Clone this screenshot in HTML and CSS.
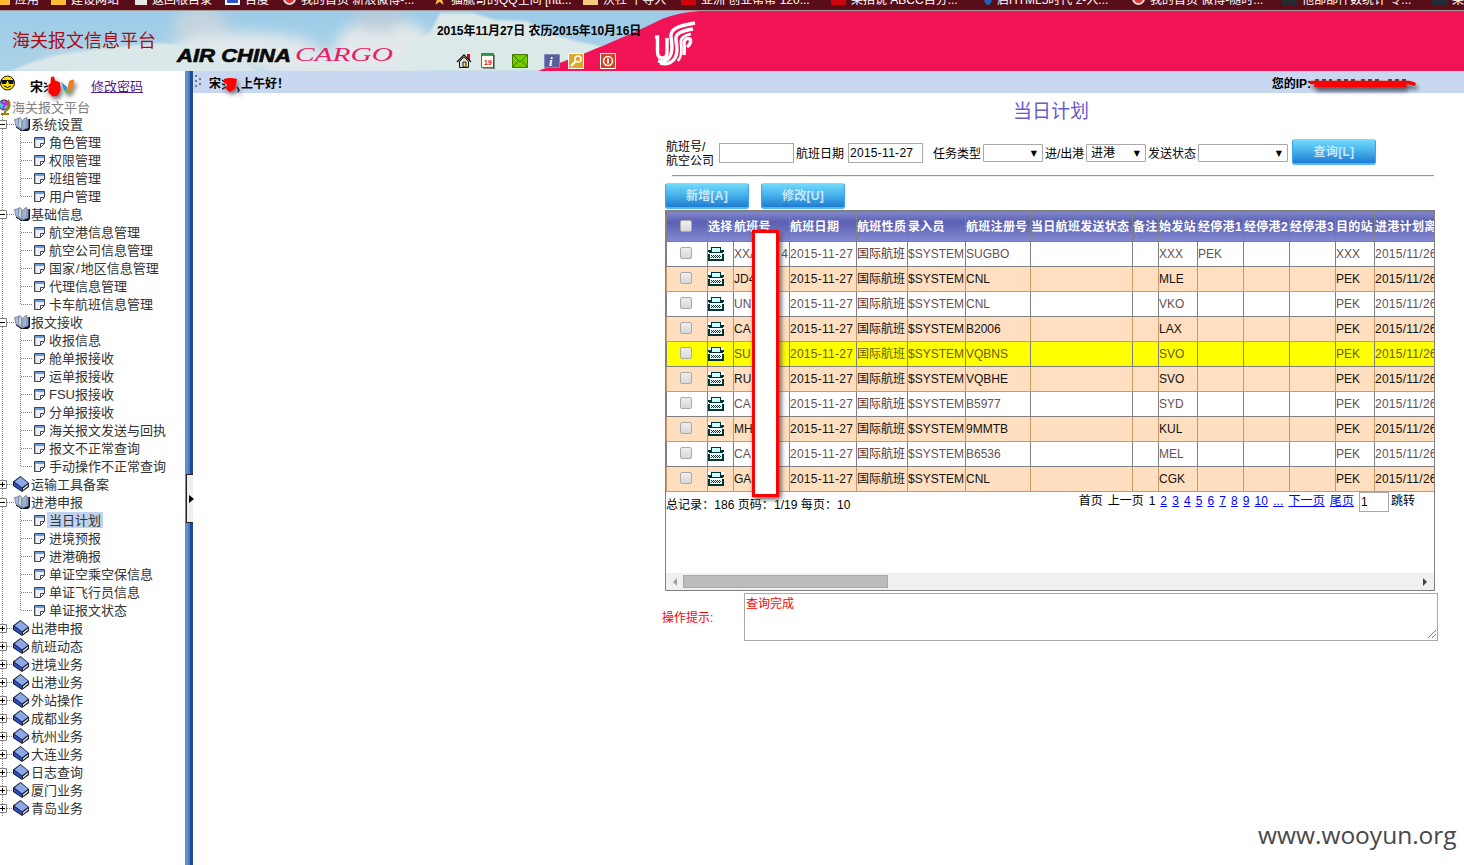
FILE: index.html
```html
<!DOCTYPE html>
<html lang="zh-CN">
<head>
<meta charset="utf-8">
<title>海关报文信息平台</title>
<link rel="stylesheet" href="styles.css">
</head>
<body>
<svg class="defs" width="0" height="0" aria-hidden="true">
  <symbol id="book-open" viewBox="0 0 16 16">
    <path d="M14 3h2v10l-2 2H7l-1-1 7-2z" fill="#111"/>
    <path d="M.500 3.500L5 2.500v8l3 4-6-4z" fill="#a9bfe9" stroke="#55658f" stroke-width=".7"/>
    <path d="M5 1.500q3 0 3 4v9q-2-4-4-4z" fill="#c5d2dd" stroke="#687486" stroke-width=".7"/>
    <path d="M8 5l3-3 2-.5v9l-5 4z" fill="#9fb2cf" stroke="#687486" stroke-width=".7"/>
    <path d="M13 3h1.500v9L8 14.500l5-4z" fill="#8199e4"/>
    <path d="M2 11l6 4" stroke="#111"/>
  </symbol>
  <symbol id="book-closed" viewBox="0 0 16 16">
    <path d="M0 5.500L7.500 0 16 7v4l-7 5-9-6z" fill="#1a1a2a"/>
    <path d="M7.500 1L15 7 9 11.500 1.500 5.700z" fill="#8ba8e8"/><path d="M1 6.500l8 6v2.500L1 9.500z" fill="#2c50cc"/>
    <path d="M10 12.500l5-4v1.500l-5 4z" fill="#fff"/>
  </symbol>
  <symbol id="tree-open" viewBox="0 0 31 18">
    <path d="M2.500 0v18M7 9.500h8" stroke="#808080" stroke-dasharray="1 1"/>
    <path d="M-2.500 5.500h9v8h-9z" fill="#fff" stroke="#808080"/><path d="M0 9.500h5" stroke="#000"/>
    <use href="#book-open" x="14" y="1" width="16" height="16"/>
  </symbol>
  <symbol id="tree-closed" viewBox="0 0 31 18">
    <path d="M2.500 0v18M7 9.500h8" stroke="#808080" stroke-dasharray="1 1"/>
    <path d="M-2.500 5.500h9v8h-9z" fill="#fff" stroke="#808080"/><path d="M0 9.500h5M2.500 7v5" stroke="#000"/>
    <use href="#book-closed" x="13" y="1" width="16" height="16"/>
  </symbol>
  <symbol id="page" viewBox="0 0 11 11">
    <path d="M.500.500h10v6l-4 4h-6z" fill="#eaf1fd" stroke="#444"/><path d="M1 1h9v2H1z" fill="#6a9be8"/>
    <path d="M1 3h1v7H1z" fill="#a4c2f4"/><path d="M6.500 10V6.500H10" fill="#fff" stroke="#444"/>
  </symbol>
  <symbol id="tree-leaf" viewBox="0 0 47 18">
    <path d="M2.500 0v18M20.500 0v18M21 9.500h11" stroke="#808080" stroke-dasharray="1 1"/>
    <use href="#page" x="34" y="4" width="11" height="11"/>
  </symbol>
  <symbol id="tree-last" viewBox="0 0 47 18">
    <path d="M2.500 0v18M20.500 0v10M21 9.500h11" stroke="#808080" stroke-dasharray="1 1"/>
    <use href="#page" x="34" y="4" width="11" height="11"/>
  </symbol>
  <symbol id="fax" viewBox="0 0 16 14">
    <path d="M3 0h10v5H3z" fill="#033"/><path d="M4 1h8v4H4z" fill="#cff"/>
    <path d="M0 3h3v2H0zM13 3h3v2h-3zM1 5h14v1H1z" fill="#033"/>
    <path d="M0 7h16v7H0z" fill="#033"/><path d="M2 7h12v5H2z" fill="#f4ffff"/>
    <path d="M3 8.500h10M3 10.500h10" stroke="#033" stroke-dasharray="1 1"/><path d="M4 9.500h9" stroke="#033" stroke-dasharray="1 1"/>
  </symbol>
</svg>

<nav class="bookmarks">
  <span class="bm" style="width:51px"><i class="ic orange"></i>应用</span>
  <span class="bm" style="width:84px"><i class="ic gold"></i>建设网站</span>
  <span class="bm" style="width:90px"><i class="ic doc"></i>返回根目录</span>
  <span class="bm" style="width:58px"><i class="ic paw"></i>百度</span>
  <span class="bm" style="width:150px"><i class="ic weibo"></i>我的首页 新浪微博-...</span>
  <span class="bm" style="width:150px"><i class="ic star"></i>猫腻哥的QQ空间 [htt...</span>
  <span class="bm" style="width:98px"><i class="ic folder"></i>沃社 平导入</span>
  <span class="bm" style="width:150px"><i class="ic red"></i>亚洲 创业帮帮 120...</span>
  <span class="bm" style="width:153px"><i class="ic red"></i>某招说 ABCC自分...</span>
  <span class="bm" style="width:148px"><i class="ic blue"></i>启HTML5时代 2-入...</span>
  <span class="bm" style="width:150px"><i class="ic weibo"></i>我的首页 微博-随时...</span>
  <span class="bm" style="width:150px"><i class="ic dark"></i>他部部件数统计 专...</span>
  <span class="bm"><i class="ic dark"></i>某</span>
</nav>

<header class="banner">
  <svg class="sky" width="1464" height="60" viewBox="0 0 1464 60">
    <defs>
      <filter id="soft" x="-20%" y="-40%" width="140%" height="180%"><feGaussianBlur stdDeviation="7"/></filter>
      <filter id="edge"><feGaussianBlur stdDeviation="1.200"/></filter>
      <linearGradient id="blue" x1="0" y1="0" x2="0" y2="1"><stop offset="0" stop-color="#9ccbe8"/><stop offset="1" stop-color="#acd3e6"/></linearGradient>
    </defs>
    <rect width="760" height="60" fill="url(#blue)"/>
    <g filter="url(#soft)" fill="#e3e9eb">
      <ellipse cx="200" cy="14" rx="27" ry="18" fill="#c5d4df"/><ellipse cx="245" cy="40" rx="75" ry="18"/>
      <ellipse cx="130" cy="55" rx="90" ry="14"/><ellipse cx="385" cy="38" rx="50" ry="30"/><ellipse cx="378" cy="8" rx="25" ry="12" fill="#b8ccda"/>
      <ellipse cx="330" cy="56" rx="70" ry="14"/>
    </g>
    <path d="M10 60l20-8 30-8 40-6 60-6 60 6 40 24z" fill="#dbe8e9" filter="url(#edge)"/>
    <path d="M395 60l15-28 20-10 10-20 32 0 24 7 30 1 24 13 30 8 30 6-30 12-20 11z" fill="#dbe9e9" filter="url(#edge)"/>
    <path d="M538 60C580 45 630 24 662 8Q680 1 700 0H1464V60z" fill="#f01457"/>
    <g fill="none" stroke="#fff" stroke-width="3.400">
      <path d="M655 26h2.500v15q0 6 5 6 4.500 0 4.500-6V27"/>
      <path d="M695 12c-19 3-25 7-24 14 1 8 2 11 0 17-2 6-7 8-13 7"/>
      <path d="M693 18c-13 2-18 5-17 11 1 8 2 12-1 18-3 5-9 7-15 5"/>
      <path d="M684 44c1-6 0-10 0-13q2-5 6-3 2 4-3 8"/>
      <path d="M691 23c-9 2-11 5-10 10 1 7 1 12-3 17" stroke-width="2.600"/>
    </g>
    <text class="air" x="177" y="51" textLength="114" lengthAdjust="spacingAndGlyphs">AIR CHINA</text>
    <text class="cargo" x="295" y="50" textLength="98" lengthAdjust="spacingAndGlyphs">CARGO</text>
  </svg>
  <div class="banner-content">
    <h1 class="brand">海关报文信息平台</h1>
    <div class="banner-tools">
      <p class="date">2015年11月27日 农历2015年10月16日</p>
      <div class="tools">
        <svg width="16" height="16" viewBox="0 0 16 16"><path d="M11 1h3v7h-3z" fill="#d0021b"/><path d="M1 9l7-7 7 7" fill="#e7e2a0" stroke="#111" stroke-width="1.300"/><path d="M3.500 8.500L8 4l4.500 4.500v6h-9z" fill="#ddd" stroke="#111"/><path d="M7 9h3v5H7z" fill="#fd3" stroke="#222"/></svg>
        <svg width="16" height="16" viewBox="0 0 16 16"><path d="M1.500.500h12v14h-12z" fill="#fffdf0" stroke="#665"/><path d="M2 1h11v2H2z" fill="#3c9b55"/><path d="M14 2v14H3" stroke="#333" fill="none"/><text class="cal-day" x="4" y="12">19</text></svg>
        <svg class="mail" width="16" height="16" viewBox="0 0 16 16"><path d="M.500 1.500h15v13H.500z" fill="#7c0" stroke="#470"/><path d="M1 2l7 7 7-7M1 14l5-6M15 14l-5-6" fill="none" stroke="#370"/></svg>
        <svg class="info" width="16" height="16" viewBox="0 0 16 16"><path d="M.500 1.500h15v13H.500z" fill="#56619c" stroke="#8189b5"/><text class="info-i" x="5" y="13">i</text></svg>
        <svg width="16" height="16" viewBox="0 0 16 16"><path d="M.500.500h15v15H.500z" fill="#dfa62c" stroke="#fff"/><circle cx="10" cy="6" r="3" fill="none" stroke="#fff" stroke-width="1.500"/><path d="M8 8l-5 5" stroke="#fff" stroke-width="2"/></svg>
        <svg class="power" width="16" height="16" viewBox="0 0 16 16"><path d="M.500.500h15v15H.500z" fill="#d5431f" stroke="#fff"/><circle cx="8" cy="8" r="4.500" fill="none" stroke="#fff" stroke-width="1.500"/><path d="M8 5.500v5" stroke="#fff" stroke-width="1.800"/></svg>
      </div>
    </div>
  </div>
</header>

<div class="frame">
  <aside class="side">
    <div class="user">
      <svg width="16" height="16" viewBox="0 0 16 16"><circle cx="7.500" cy="8" r="7" fill="#fd0" stroke="#111"/><path d="M1 5h13l-1 4h-4L8 6H7L6 9H2z" fill="#111"/><path d="M4 11q3.500 3 7 0" stroke="#111" fill="none"/></svg>
      <b class="uname">宋</b>
      <svg class="smudge" width="34" height="22" viewBox="0 0 34 22"><path d="M0 7l3 1M0 11l4-1M0 16l4-3" stroke="#222" stroke-width="1.500"/><path d="M17 6l6 5 1 6-3-1z" fill="#2a93d5"/><path d="M23 17l2-12q6-4 5 2l-3 8z" fill="#f47b20"/><path d="M20 14l4 4 2-3-2-2z" fill="#7ab648"/><path d="M7 1l3-.5 1 4 5 2 .5 8-3 5-5 1-4-4 0-8 2-1z" fill="#f00"/></svg>
      <a class="pw" href="#">修改密码</a>
    </div>
    <div class="root"><svg width="12" height="16" viewBox="0 0 12 16"><circle cx="4" cy="6" r="5" fill="#40c8d8" stroke="#222"/><path d="M1 3l4 2-2 5M5 1l2 4 2 2" stroke="#d020d0" stroke-width="2" fill="none"/><path d="M8 1q4 6-2 11M5 12v2M1 15h8" stroke="#a08000" stroke-width="2" fill="none"/></svg><span>海关报文平台</span></div>
    <ul class="tree">
      <li><svg class="n"><use href="#tree-open"/></svg><span>系统设置</span></li>
      <li><svg class="l"><use href="#tree-leaf"/></svg><span class="leaf">角色管理</span></li>
      <li><svg class="l"><use href="#tree-leaf"/></svg><span class="leaf">权限管理</span></li>
      <li><svg class="l"><use href="#tree-leaf"/></svg><span class="leaf">班组管理</span></li>
      <li><svg class="l"><use href="#tree-last"/></svg><span class="leaf">用户管理</span></li>
      <li><svg class="n"><use href="#tree-open"/></svg><span>基础信息</span></li>
      <li><svg class="l"><use href="#tree-leaf"/></svg><span class="leaf">航空港信息管理</span></li>
      <li><svg class="l"><use href="#tree-leaf"/></svg><span class="leaf">航空公司信息管理</span></li>
      <li><svg class="l"><use href="#tree-leaf"/></svg><span class="leaf slash">国家<s>/</s>地区信息管理</span></li>
      <li><svg class="l"><use href="#tree-leaf"/></svg><span class="leaf">代理信息管理</span></li>
      <li><svg class="l"><use href="#tree-last"/></svg><span class="leaf">卡车航班信息管理</span></li>
      <li><svg class="n"><use href="#tree-open"/></svg><span>报文接收</span></li>
      <li><svg class="l"><use href="#tree-leaf"/></svg><span class="leaf">收报信息</span></li>
      <li><svg class="l"><use href="#tree-leaf"/></svg><span class="leaf">舱单报接收</span></li>
      <li><svg class="l"><use href="#tree-leaf"/></svg><span class="leaf">运单报接收</span></li>
      <li><svg class="l"><use href="#tree-leaf"/></svg><span class="leaf">FSU报接收</span></li>
      <li><svg class="l"><use href="#tree-leaf"/></svg><span class="leaf">分单报接收</span></li>
      <li><svg class="l"><use href="#tree-leaf"/></svg><span class="leaf">海关报文发送与回执</span></li>
      <li><svg class="l"><use href="#tree-leaf"/></svg><span class="leaf">报文不正常查询</span></li>
      <li><svg class="l"><use href="#tree-last"/></svg><span class="leaf">手动操作不正常查询</span></li>
      <li><svg class="n"><use href="#tree-closed"/></svg><span>运输工具备案</span></li>
      <li><svg class="n"><use href="#tree-open"/></svg><span>进港申报</span></li>
      <li><svg class="l"><use href="#tree-leaf"/></svg><span class="leaf current">当日计划</span></li>
      <li><svg class="l"><use href="#tree-leaf"/></svg><span class="leaf">进境预报</span></li>
      <li><svg class="l"><use href="#tree-leaf"/></svg><span class="leaf">进港确报</span></li>
      <li><svg class="l"><use href="#tree-leaf"/></svg><span class="leaf">单证空乘空保信息</span></li>
      <li><svg class="l"><use href="#tree-leaf"/></svg><span class="leaf">单证飞行员信息</span></li>
      <li><svg class="l"><use href="#tree-last"/></svg><span class="leaf">单证报文状态</span></li>
      <li><svg class="n"><use href="#tree-closed"/></svg><span>出港申报</span></li>
      <li><svg class="n"><use href="#tree-closed"/></svg><span>航班动态</span></li>
      <li><svg class="n"><use href="#tree-closed"/></svg><span>进境业务</span></li>
      <li><svg class="n"><use href="#tree-closed"/></svg><span>出港业务</span></li>
      <li><svg class="n"><use href="#tree-closed"/></svg><span>外站操作</span></li>
      <li><svg class="n"><use href="#tree-closed"/></svg><span>成都业务</span></li>
      <li><svg class="n"><use href="#tree-closed"/></svg><span>杭州业务</span></li>
      <li><svg class="n"><use href="#tree-closed"/></svg><span>大连业务</span></li>
      <li><svg class="n"><use href="#tree-closed"/></svg><span>日志查询</span></li>
      <li><svg class="n"><use href="#tree-closed"/></svg><span>厦门业务</span></li>
      <li><svg class="n"><use href="#tree-closed"/></svg><span>青岛业务</span></li>
    </ul>
  </aside>
  <div class="splitter"><button class="handle" aria-label="toggle"><svg width="5" height="8" viewBox="0 0 5 8"><path d="M0 0l5 4-5 4z"/></svg></button></div>
  <main class="main">
    <div class="greet">
      <svg width="8" height="15" viewBox="0 0 8 15"><path d="M1 1h2v2H1zM5 4h2v2H5zM1 6h2v2H1zM5 9h2v2H5zM1 11h2v2H1z" fill="#6b7a90"/></svg>
      <b class="hello">宋</b>
      <svg class="blot" width="20" height="20" viewBox="0 0 20 20"><path d="M0 6l3 2M0 10l3 1M0 15l4-2M15 13l2 3-1 2" stroke="#222" stroke-width="1.500" fill="none"/><path d="M2 5l4-1 4 0 5 1-1 5-1 5-5 3-4-3 1-5-3-1z" fill="#f00"/></svg>
      <b>上午好！</b>
      <b class="ip">您的IP:</b>
      <svg class="strike" width="112" height="16" viewBox="0 0 112 16"><path d="M8 4h17M30 4h18M54 4h20M81 4h18" stroke="#222" stroke-width="1.500" stroke-dasharray="4 3"/><path d="M4 6.500h98l5 1.500M9 9.500h89" stroke="#f00" stroke-width="3.600" stroke-linecap="round" fill="none"/></svg>
    </div>
    <h2 class="title">当日计划</h2>
    <form class="query">
      <label class="two">航班号/<br>航空公司</label><span class="field w75 a"></span>
      <label class="b">航班日期</label><span class="field w75 c">2015-11-27</span>
      <label class="d">任务类型</label><span class="sel w60"><i>▼</i></span>
      <label class="e">进/出港</label><span class="sel w60"><em>进港</em><i>▼</i></span>
      <label class="e2">发送状态</label><span class="sel w90"><i>▼</i></span>
      <button type="button" class="btn go">查询[L]</button>
    </form>
    <hr class="rule">
    <div class="actions"><button class="btn">新增[A]</button><button class="btn">修改[U]</button></div>
    <section class="gridbox">
      <div class="clip">
      <table class="grid">
        <colgroup><col style="width:41px"><col style="width:26px"><col style="width:56px"><col style="width:67px"><col style="width:51px"><col style="width:58px"><col style="width:65px"><col style="width:102px"><col style="width:26px"><col style="width:39px"><col style="width:46px"><col style="width:46px"><col style="width:46px"><col style="width:39px"><col style="width:110px"></colgroup>
        <thead><tr><th><i class="ck"></i></th><th>选择</th><th>航班号</th><th>航班日期</th><th>航班性质</th><th>录入员</th><th>航班注册号</th><th>当日航班发送状态</th><th>备注</th><th>始发站</th><th>经停港1</th><th>经停港2</th><th>经停港3</th><th>目的站</th><th>进港计划离港</th></tr></thead>
        <tbody>
        <tr><td><i class="ck"></i></td><td><svg class="fx"><use href="#fax"/></svg></td><td><span class="split"><span>XXA</span><span>4</span></span></td><td class="dt">2015-11-27</td><td class="cn">国际航班</td><td>$SYSTEM</td><td>SUGBO</td><td></td><td></td><td>XXX</td><td>PEK</td><td></td><td></td><td>XXX</td><td class="dt">2015/11/26</td></tr>
        <tr class="alt"><td><i class="ck"></i></td><td><svg class="fx"><use href="#fax"/></svg></td><td>JD4</td><td class="dt">2015-11-27</td><td class="cn">国际航班</td><td>$SYSTEM</td><td>CNL</td><td></td><td></td><td>MLE</td><td></td><td></td><td></td><td>PEK</td><td class="dt">2015/11/26</td></tr>
        <tr><td><i class="ck"></i></td><td><svg class="fx"><use href="#fax"/></svg></td><td>UN</td><td class="dt">2015-11-27</td><td class="cn">国际航班</td><td>$SYSTEM</td><td>CNL</td><td></td><td></td><td>VKO</td><td></td><td></td><td></td><td>PEK</td><td class="dt">2015/11/26</td></tr>
        <tr class="alt"><td><i class="ck"></i></td><td><svg class="fx"><use href="#fax"/></svg></td><td>CA</td><td class="dt">2015-11-27</td><td class="cn">国际航班</td><td>$SYSTEM</td><td>B2006</td><td></td><td></td><td>LAX</td><td></td><td></td><td></td><td>PEK</td><td class="dt">2015/11/26</td></tr>
        <tr class="hot"><td><i class="ck"></i></td><td><svg class="fx"><use href="#fax"/></svg></td><td>SU</td><td class="dt">2015-11-27</td><td class="cn">国际航班</td><td>$SYSTEM</td><td>VQBNS</td><td></td><td></td><td>SVO</td><td></td><td></td><td></td><td>PEK</td><td class="dt">2015/11/26</td></tr>
        <tr class="alt"><td><i class="ck"></i></td><td><svg class="fx"><use href="#fax"/></svg></td><td>RU</td><td class="dt">2015-11-27</td><td class="cn">国际航班</td><td>$SYSTEM</td><td>VQBHE</td><td></td><td></td><td>SVO</td><td></td><td></td><td></td><td>PEK</td><td class="dt">2015/11/26</td></tr>
        <tr><td><i class="ck"></i></td><td><svg class="fx"><use href="#fax"/></svg></td><td>CA</td><td class="dt">2015-11-27</td><td class="cn">国际航班</td><td>$SYSTEM</td><td>B5977</td><td></td><td></td><td>SYD</td><td></td><td></td><td></td><td>PEK</td><td class="dt">2015/11/26</td></tr>
        <tr class="alt"><td><i class="ck"></i></td><td><svg class="fx"><use href="#fax"/></svg></td><td>MH</td><td class="dt">2015-11-27</td><td class="cn">国际航班</td><td>$SYSTEM</td><td>9MMTB</td><td></td><td></td><td>KUL</td><td></td><td></td><td></td><td>PEK</td><td class="dt">2015/11/26</td></tr>
        <tr><td><i class="ck"></i></td><td><svg class="fx"><use href="#fax"/></svg></td><td>CA</td><td class="dt">2015-11-27</td><td class="cn">国际航班</td><td>$SYSTEM</td><td>B6536</td><td></td><td></td><td>MEL</td><td></td><td></td><td></td><td>PEK</td><td class="dt">2015/11/26</td></tr>
        <tr class="alt"><td><i class="ck"></i></td><td><svg class="fx"><use href="#fax"/></svg></td><td>GA</td><td class="dt">2015-11-27</td><td class="cn">国际航班</td><td>$SYSTEM</td><td>CNL</td><td></td><td></td><td>CGK</td><td></td><td></td><td></td><td>PEK</td><td class="dt">2015/11/26</td></tr>
        </tbody>
      </table>
      </div>
      <div class="pager">
        <span class="totals">总记录：186 页码：1/19 每页：10</span>
        <div class="pages"><span>首页</span><span>上一页</span><span class="p1">1</span><a>2</a><a>3</a><a>4</a><a>5</a><a>6</a><a>7</a><a>8</a><a>9</a><a>10</a><a>...</a><a>下一页</a><a>尾页</a><span class="field jump">1</span><span class="tz">跳转</span></div>
      </div>
      <div class="scroll"><i class="arr left"></i><i class="thumb"></i><i class="arr right"></i></div>
      <div class="mask"></div>
    </section>
    <div class="tip"><label>操作提示:</label><div class="msg">查询完成<svg width="8" height="8" viewBox="0 0 8 8"><path d="M0 8l8-8M4 8l4-4" stroke="#777"/></svg></div></div>
    <div class="mark">www.wooyun.org</div>
  </main>
</div>
</body>
</html>
```
FILE: styles.css
```css
* { box-sizing: border-box; }
body { margin: 0; width: 1464px; height: 865px; overflow: hidden; background: #fff; color: #000; font: 12px/14px "Liberation Sans", "Noto Sans CJK SC", sans-serif; }
p, h1, h2, ul { margin: 0; padding: 0; }
i, em { font-style: normal; }
s { text-decoration: none; }
svg { display: block; flex: none; }
.defs { position: absolute; }

.bookmarks { display: flex; align-items: flex-end; height: 11px; overflow: hidden; background: #590d19; border-bottom: 1px solid #a89a9a; padding-bottom: 2px; color: #fff; }
.bm { display: flex; flex: none; align-items: center; gap: 5px; height: 16px; line-height: 16px; white-space: nowrap; }
.bm:first-child .ic { width: 10px; }
.ic { width: 15px; height: 13px; flex: none; margin-top: -3px; background: #fb3; }
.ic.doc { width: 12px; background: #e8e8e8; }
.ic.paw { background: #3050d8; border: 2px solid #fff; }
.ic.weibo { width: 13px; border-radius: 50%; background: #d33; border: 2px solid #ddd; }
.ic.star { width: 13px; clip-path: polygon(50% 0, 62% 38%, 100% 38%, 70% 60%, 82% 100%, 50% 75%, 18% 100%, 30% 60%, 0 38%, 38% 38%); }
.ic.folder { background: #f3ca80; }
.ic.red { background: #d0000c; }
.ic.blue { width: 8px; border-radius: 0 0 50% 50%; background: #1b62b5; }
.ic.dark { background: #252a33; }

.banner { position: relative; height: 60px; overflow: hidden; }
.sky { position: absolute; left: 0; top: 0; }
.air { font: italic bold 19px "Liberation Sans", sans-serif; fill: #0a0a0a; stroke: #0a0a0a; stroke-width: .7; }
.cargo { font: italic 18px "Liberation Serif", serif; fill: #ea1c64; }
.banner-content { position: relative; display: flex; padding-left: 12px; }
.brand { width: 425px; padding-top: 17px; font-size: 18px; line-height: 26px; font-weight: 400; color: #a80d12; }
.date { padding-top: 13px; font-weight: 700; letter-spacing: -.05px; white-space: nowrap; }
.tools { display: flex; padding: 15px 0 0 19px; gap: 8px; }
.mail { margin-left: 8px; }
.info { margin-left: 8px; }
.power { margin-left: 8px; }
.cal-day { font: bold 7px "Liberation Sans", sans-serif; fill: #d22; }
.info-i { font: italic bold 13px "Liberation Serif", serif; fill: #fff; }

.frame { display: flex; height: 794px; }
.side { width: 185px; overflow: hidden; font-size: 13px; color: #333; }
.user { display: flex; align-items: center; height: 28px; padding-top: 4px; color: #000; }
.user > svg:first-child { margin-top: -8px; }
.uname { margin-left: 14px; font-size: 13px; }
.smudge { margin: 0 13px 0 1px; overflow: visible; filter: drop-shadow(2px 3px 2px #777); }
.pw { color: #551a8b; margin-top: -1px; }
.root { display: flex; align-items: center; height: 16px; color: #808080; }
.root span { padding-top: 2px; }
.tree { list-style: none; }
.tree li { display: flex; align-items: center; height: 18px; line-height: 17px; white-space: nowrap; }
.n { width: 31px; height: 18px; }
.l { width: 47px; height: 18px; }
.leaf { padding: 0 2px; height: 16px; }
.slash s { padding: 0 1px; }
.current { background: #c0d2ee; }

.splitter { display: flex; align-items: flex-start; width: 8px; background: linear-gradient(90deg, #5d90dc 0 3px, #4d7bb0 3px 5px, #1f4a8c 5px); }
.handle { width: 7px; height: 49px; margin: 403px 0 0 1px; padding: 0 0 0 2px; border: 1px solid #222; border-right: 0; background: #efefef; }

.main { width: 1271px; }
.greet { display: flex; align-items: center; height: 22px; background: #c8d8f0; padding: 3px 46px 0 1px; }
.greet > svg:first-child { margin-top: -4px; }
.hello { margin-left: 7px; }
.blot { margin: 0 -1px 0 1px; filter: drop-shadow(2px 3px 2px #778); }
.greet .ip { margin-left: auto; }
.strike { margin: 0 -1px 0 -4px; overflow: visible; filter: drop-shadow(2px 4px 2px #556); }
.title { margin: 5px 0 0 820px; font-size: 19px; line-height: 28px; font-weight: 400; color: #6a5acd; }
.query { display: flex; align-items: center; height: 28px; margin: 13px 0 0 473px; white-space: nowrap; }
.query label { flex: none; padding-top: 1px; }
.two { width: 53px; }
.field { display: block; flex: none; height: 20px; border: 1px solid #a9a9a9; background: #fff; line-height: 18px; padding-left: 1px; letter-spacing: .28px; }
.w75 { width: 75px; }
.b { width: 54px; padding-left: 2px; }
.d { width: 60px; padding-left: 10px; }
.e { width: 43px; padding-left: 2px; letter-spacing: -.1px; }
.e2 { width: 52px; padding-left: 2px; }
.sel { display: flex; flex: none; justify-content: flex-end; align-items: center; height: 18px; border: 1px solid #a9a9a9; border-radius: 1px; padding: 0 5px 0 4px; }
.sel i { font: 8px "DejaVu Sans", sans-serif; }
.sel em { margin-right: auto; }
.w60 { width: 60px; }
.w90 { width: 90px; }
.btn { width: 84px; height: 26px; padding: 0 0 2px; border: 1px solid #3aa5e6; border-top-color: #7fdcff; border-bottom: 2px solid #52b8ee; border-radius: 3px; background: linear-gradient(#72d8fb, #4ab4ec 45%, #1f7bd2); color: #c8e8fc; font: bold 12px "Liberation Sans", "Noto Sans CJK SC", sans-serif; letter-spacing: .3px; }
.go { margin-left: 4px; margin-top: -2px; }
.rule { width: 762px; height: 2px; margin: 8px 0 0 479px; border: 0; border-top: 1px solid #959595; border-bottom: 1px solid #eee; }
.actions { display: flex; gap: 12px; margin: 6px 0 1px 472px; }

.gridbox { position: relative; display: flex; flex-direction: column; width: 770px; height: 381px; margin-left: 472px; border: 1px solid #808080; }
.clip { overflow: hidden; border-top: 1px solid #808080; }
.grid { width: 758px; table-layout: fixed; border-collapse: separate; border-spacing: 0; white-space: nowrap; }
.grid th, .grid td { padding: 0; border: 0 solid #808080; border-width: 0 0 1px 1px; text-align: left; overflow: visible; }
.grid th:first-child, .grid td:first-child { text-align: center; }
.grid th { height: 30px; background: linear-gradient(#8287cc, #5a5fb2 35%, #8288d0); color: #fff; letter-spacing: .3px; }
.grid td { height: 25px; color: #665052; line-height: 14px; }
.grid .cn { color: #5c2e2e; }
.grid .dt { letter-spacing: .26px; }
.grid .alt td { background: #ffdfbf; border-color: #cc9966; color: #111; }
.grid .hot td { background: #ff0; color: #6b5a10; }
.ck { display: inline-block; width: 12px; height: 12px; vertical-align: middle; margin: -3px 0 0 -2px; border: 1px solid #aaa; border-radius: 2px; background: linear-gradient(#eee, #d8d8d8); }
.fx { width: 16px; height: 14px; background: #fff; }
.split { display: flex; justify-content: space-between; padding-right: 1px; }
.pager { display: flex; justify-content: space-between; padding-right: 19px; }
.totals { padding-top: 6px; letter-spacing: .05px; }
.pages { display: flex; gap: 5px; line-height: 19px; }
.pages > :first-child { margin-left: -2px; }
.p1 { margin-right: 0; }
.pages a { color: #00f; text-decoration: underline; letter-spacing: .1px; }
.pages .jump { width: 30px; }
.pages .tz { margin-left: -3px; }
.scroll { display: flex; align-items: center; height: 17px; margin-top: auto; background: #f0f0f0; padding: 0 7px; }
.arr { border: 4px solid transparent; width: 0; height: 0; }
.arr.left { border-width: 4px 4px 4px 0; border-right-color: #a0a0a0; }
.arr.right { border-width: 4px 0 4px 4px; border-left-color: #444; margin-left: auto; }
.thumb { width: 205px; height: 13px; margin-left: 6px; background: #bcbcbc; border: 1px solid #a8a8a8; }
.mask { position: absolute; left: 86px; top: 19px; width: 27px; height: 267px; border: 3px solid #f00; background: #fff; box-shadow: 2px 2px 5px #555; }

.tip { display: flex; align-items: center; margin: 2px 0 0 469px; color: #f00; }
.tip label { width: 82px; padding-top: 2px; }
.msg { display: flex; justify-content: space-between; width: 694px; height: 48px; border: 1px solid #a9a9a9; padding: 2px 1px; line-height: 17px; }
.msg svg { align-self: flex-end; }
.mark { margin: 179px 0 0 1065px; font: 24.500px/30px "Open Sans", sans-serif; color: #484848; white-space: nowrap; }
```
